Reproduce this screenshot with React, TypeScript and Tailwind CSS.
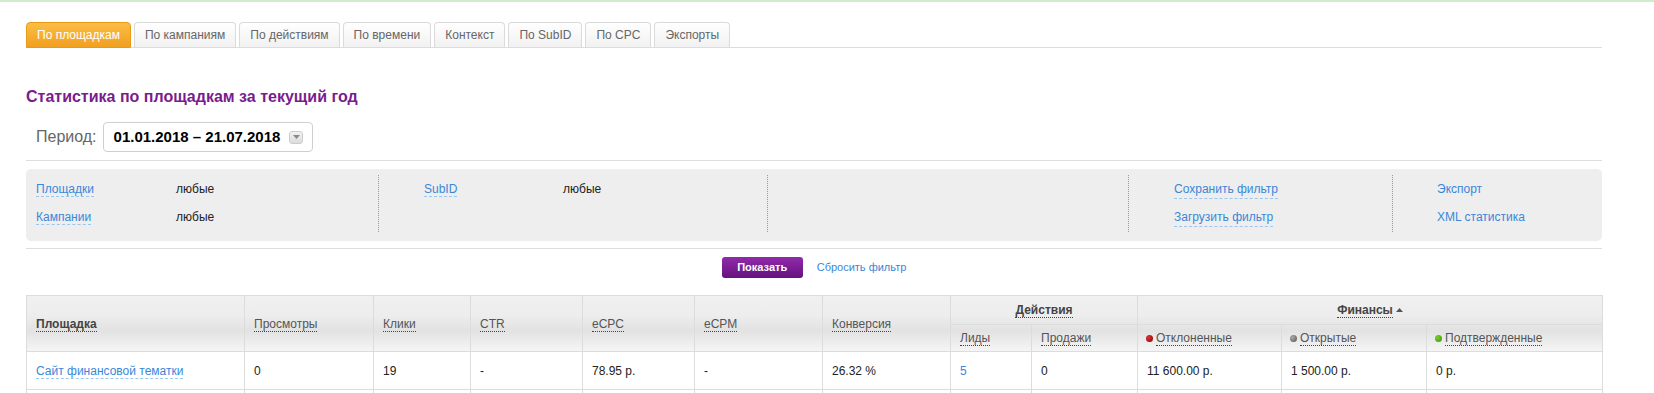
import React from 'react';

const tabs = ['По площадкам', 'По кампаниям', 'По действиям', 'По времени', 'Контекст', 'По SubID', 'По CPC', 'Экспорты'];

const colWidths = [218, 129, 97, 112, 112, 128, 128, 81, 106, 144, 145, 176];

const Dot: React.FC<{ color: string }> = ({ color }) => (
  <span className={`mr-[3px] inline-block h-[7px] w-[7px] rounded-full align-[0px] ${color}`} />
);

const FLink: React.FC<{ children: React.ReactNode }> = ({ children }) => (
  <span className="border-b border-dashed border-[#9dc6ee] text-[#3a87d9]">{children}</span>
);

const Th: React.FC<{ children: React.ReactNode; bold?: boolean }> = ({ children, bold }) => (
  <span className={`border-b border-dotted border-[#444] ${bold ? 'font-bold text-[#444]' : 'text-[#555]'}`}>{children}</span>
);

export default function App() {
  return (
    <div className="min-h-screen bg-white font-['Liberation_Sans',Arial,sans-serif] text-[12px] text-[#222]">
      <div className="h-[2px] bg-[#cfeccd]" />
      <div className="pl-[26px] pr-[52px]">
        {/* tabs */}
        <div className="mt-[20px] flex gap-[3px] border-b border-[#dcdcdc]">
          {tabs.map((t, i) =>
            i === 0 ? (
              <div
                key={t}
                className="-mb-px flex h-[26px] items-center rounded-t-[4px] border border-[#e99a17] bg-[linear-gradient(to_bottom,#fbbd45,#f0a020)] px-[10px] text-white"
              >
                {t}
              </div>
            ) : (
              <div
                key={t}
                className="flex h-[25px] items-center rounded-t-[4px] border border-b-0 border-[#dadada] bg-[linear-gradient(to_bottom,#ffffff,#f1f1f1)] px-[10px] text-[#666]"
              >
                {t}
              </div>
            )
          )}
        </div>

        <h1 className="mt-[39px] text-[16px] leading-[20px] font-bold text-[#7a1b8e]">Статистика по площадкам за текущий год</h1>

        <div className="mt-[15px] flex items-center pl-[10px]">
          <span className="mr-[6px] text-[16px] text-[#666]">Период:</span>
          <div className="flex h-[30px] w-[210px] items-center rounded-[4px] border border-[#cfcfcf] pl-[10px] text-[15px] font-bold text-black">
            <span>01.01.2018 – 21.07.2018</span>
            <span className="ml-[9px] flex h-[13px] w-[14px] items-center justify-center rounded-[3px] border border-[#cdcdcd] bg-[linear-gradient(to_bottom,#f2f2f2,#dcdcdc)]">
              <svg width="7" height="4" viewBox="0 0 7 4">
                <path d="M0 0h7L3.5 4z" fill="#8a8a8a" />
              </svg>
            </span>
          </div>
        </div>

        <div className="mt-[8px] border-t border-[#dedede]" />

        {/* filter */}
        <div className="mt-[8px] flex h-[72px] rounded-[5px] bg-[#eeeeee] pt-[6px]">
          <div className="w-[352px] pl-[10px]">
            <div className="flex h-[28px] items-center">
              <span className="w-[140px]"><FLink>Площадки</FLink></span>
              <span>любые</span>
            </div>
            <div className="flex h-[28px] items-center">
              <span className="w-[140px]"><FLink>Кампании</FLink></span>
              <span>любые</span>
            </div>
          </div>
          <div className="h-[57px] w-[389px] border-l border-dotted border-[#9a9a9a] pl-[45px]">
            <div className="flex h-[28px] items-center">
              <span className="w-[139px]"><FLink>SubID</FLink></span>
              <span>любые</span>
            </div>
          </div>
          <div className="h-[57px] w-[361px] border-l border-dotted border-[#9a9a9a]" />
          <div className="h-[57px] w-[264px] border-l border-dotted border-[#9a9a9a] pl-[45px]">
            <div className="flex h-[28px] items-center">
              <FLink>Сохранить фильтр</FLink>
            </div>
            <div className="flex h-[28px] items-center">
              <FLink>Загрузить фильтр</FLink>
            </div>
          </div>
          <div className="h-[57px] flex-1 border-l border-dotted border-[#9a9a9a] pl-[44px] text-[#3a87d9]">
            <div className="flex h-[28px] items-center">Экспорт</div>
            <div className="flex h-[28px] items-center">XML статистика</div>
          </div>
        </div>

        <div className="mt-[7px] border-t border-[#dedede]" />

        <div className="mt-[8px] flex items-center justify-center gap-[14px]">
          <button className="h-[21px] w-[81px] rounded-[3px] bg-[linear-gradient(to_bottom,#922aab,#65127f)] text-[11px] font-bold text-white">
            Показать
          </button>
          <span className="text-[11px] text-[#3a87d9]">Сбросить фильтр</span>
        </div>

        {/* table */}
        <table className="mt-[17px] w-full table-fixed border-collapse border border-[#dcdcdc]">
          <colgroup>
            {colWidths.map((w, i) => (
              <col key={i} style={{ width: w }} />
            ))}
          </colgroup>
          <thead className="bg-[linear-gradient(to_bottom,#f0f0f0_0%,#ededed_35%,#e2e2e2_62%,#f6f6f6_100%)] text-left">
            <tr className="h-[29px]">
              <th rowSpan={2} className="border border-[#dcdcdc] pl-[9px] font-normal"><Th bold>Площадка</Th></th>
              <th rowSpan={2} className="border border-[#dcdcdc] pl-[9px] font-normal"><Th>Просмотры</Th></th>
              <th rowSpan={2} className="border border-[#dcdcdc] pl-[9px] font-normal"><Th>Клики</Th></th>
              <th rowSpan={2} className="border border-[#dcdcdc] pl-[9px] font-normal"><Th>CTR</Th></th>
              <th rowSpan={2} className="border border-[#dcdcdc] pl-[9px] font-normal"><Th>eCPC</Th></th>
              <th rowSpan={2} className="border border-[#dcdcdc] pl-[9px] font-normal"><Th>eCPM</Th></th>
              <th rowSpan={2} className="border border-[#dcdcdc] pl-[9px] font-normal"><Th>Конверсия</Th></th>
              <th colSpan={2} className="border border-[#dcdcdc] text-center font-normal"><Th bold>Действия</Th></th>
              <th colSpan={3} className="border border-[#dcdcdc] text-center font-normal">
                <Th bold>Финансы</Th>
                <svg className="ml-[3px] inline-block align-[2px]" width="7" height="4" viewBox="0 0 7 4">
                  <path d="M0 4h7L3.5 0z" fill="#555" />
                </svg>
              </th>
            </tr>
            <tr className="h-[27px]">
              <th className="border border-[#dcdcdc] pl-[9px] font-normal"><Th>Лиды</Th></th>
              <th className="border border-[#dcdcdc] pl-[9px] font-normal"><Th>Продажи</Th></th>
              <th className="border border-[#dcdcdc] pl-[8px] font-normal">
                <Dot color="bg-[radial-gradient(circle_at_35%_35%,#d33,#8a0000)]" />
                <Th>Отклоненные</Th>
              </th>
              <th className="border border-[#dcdcdc] pl-[8px] font-normal">
                <Dot color="bg-[radial-gradient(circle_at_35%_35%,#aaa,#555)]" />
                <Th>Открытые</Th>
              </th>
              <th className="border border-[#dcdcdc] pl-[8px] font-normal">
                <Dot color="bg-[radial-gradient(circle_at_35%_35%,#7c3,#3a9a00)]" />
                <Th>Подтвержденные</Th>
              </th>
            </tr>
          </thead>
          <tbody>
            <tr className="h-[38px]">
              <td className="border border-[#dcdcdc] pl-[9px]"><FLink>Сайт финансовой тематки</FLink></td>
              <td className="border border-[#dcdcdc] pl-[9px]">0</td>
              <td className="border border-[#dcdcdc] pl-[9px]">19</td>
              <td className="border border-[#dcdcdc] pl-[9px]">-</td>
              <td className="border border-[#dcdcdc] pl-[9px]">78.95 р.</td>
              <td className="border border-[#dcdcdc] pl-[9px]">-</td>
              <td className="border border-[#dcdcdc] pl-[9px]">26.32 %</td>
              <td className="border border-[#dcdcdc] pl-[9px] text-[#3a87d9]">5</td>
              <td className="border border-[#dcdcdc] pl-[9px]">0</td>
              <td className="border border-[#dcdcdc] pl-[9px]">11 600.00 р.</td>
              <td className="border border-[#dcdcdc] pl-[9px]">1 500.00 р.</td>
              <td className="border border-[#dcdcdc] pl-[9px]">0 р.</td>
            </tr>
            <tr className="h-[38px]">
              {colWidths.map((_, i) => (
                <td key={i} className="border border-[#dcdcdc]" />
              ))}
            </tr>
          </tbody>
        </table>
      </div>
    </div>
  );
}
